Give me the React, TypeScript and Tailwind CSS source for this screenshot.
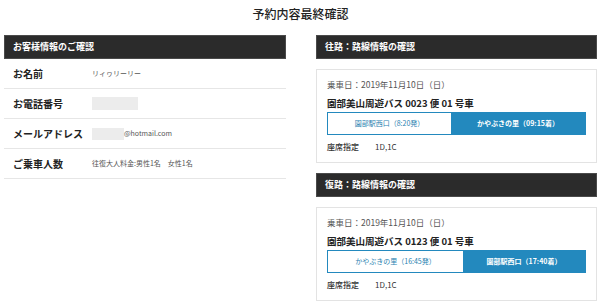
const FONT = "font-['Noto_Sans_CJK_JP','Noto_Sans',sans-serif]";

type Leg = {
  title: string;
  date: string;
  bus: string;
  from: string;
  to: string;
  split: string;
  seats: string;
};

const legs: Leg[] = [
  {
    title: "往路：路線情報の確認",
    date: "乗車日：2019年11月10日（日）",
    bus: "園部美山周遊バス 0023 便 01 号車",
    from: "園部駅西口（8:20発）",
    to: "かやぶきの里（09:15着）",
    split: "w-[123px]",
    seats: "1D,1C",
  },
  {
    title: "復路：路線情報の確認",
    date: "乗車日：2019年11月10日（日）",
    bus: "園部美山周遊バス 0123 便 01 号車",
    from: "かやぶきの里（16:45発）",
    to: "園部駅西口（17:40着）",
    split: "w-[135px]",
    seats: "1D,1C",
  },
];

function SectionHeader({ children }: { children: string }) {
  return (
    <div className="flex h-[24px] items-center border border-[#4a4a4a] bg-[#2b2b2b] pl-[8px] text-[9px] font-bold text-white">
      {children}
    </div>
  );
}

function InfoRow({ label, children }: { label: string; children: React.ReactNode }) {
  return (
    <div className="flex h-[30px] items-center border-b border-[#e6e6e6]">
      <div className="w-[88px] pl-[9px] text-[10px] font-bold text-[#222]">{label}</div>
      <div className="flex items-center text-[7px] text-[#555]">{children}</div>
    </div>
  );
}

function LegCard({ leg }: { leg: Leg }) {
  return (
    <div>
      <SectionHeader>{leg.title}</SectionHeader>
      <div className="mt-[10px] border border-[#e3e3e3] px-[10px] pb-[9px] pt-[8px]">
        <div className="text-[8.5px] leading-[12px] text-[#555]">{leg.date}</div>
        <div className="mt-[6px] text-[9.5px] font-semibold leading-[14px] text-[#222]">{leg.bus}</div>
        <div className="mt-[2px] flex h-[23px] border border-[#2389be] text-[7px]">
          <div className={`${leg.split} flex items-center justify-center bg-white text-[#2a7fb0]`}>
            {leg.from}
          </div>
          <div className="flex flex-1 items-center justify-center bg-[#2389be] font-bold text-white">
            {leg.to}
          </div>
        </div>
        <div className="mt-[6px] flex text-[8px] leading-[12px] text-[#333]">
          <span className="w-[48px] font-medium">座席指定</span>
          <span>{leg.seats}</span>
        </div>
      </div>
    </div>
  );
}

export default function App() {
  return (
    <div className={`${FONT} h-[306px] w-[600px] overflow-hidden bg-white px-[4px] pr-[3px]`}>
      <div className="pt-[5px] text-center text-[12px] font-medium leading-[18px] text-[#222]">
        予約内容最終確認
      </div>
      <div className="mt-[12px] flex gap-[30px]">
        <div className="w-[282px]">
          <SectionHeader>お客様情報のご確認</SectionHeader>
          <InfoRow label="お名前">リィヮリーリー</InfoRow>
          <InfoRow label="お電話番号">
            <span className="inline-block h-[13px] w-[46px] bg-[#ececec]" />
          </InfoRow>
          <InfoRow label="メールアドレス">
            <span className="inline-block h-[12px] w-[32px] bg-[#ececec]" />
            <span>@hotmail.com</span>
          </InfoRow>
          <InfoRow label="ご乗車人数">往復大人料金:男性1名　女性1名</InfoRow>
        </div>
        <div className="flex flex-1 flex-col gap-[10px]">
          {legs.map((leg) => (
            <LegCard key={leg.title} leg={leg} />
          ))}
        </div>
      </div>
    </div>
  );
}
